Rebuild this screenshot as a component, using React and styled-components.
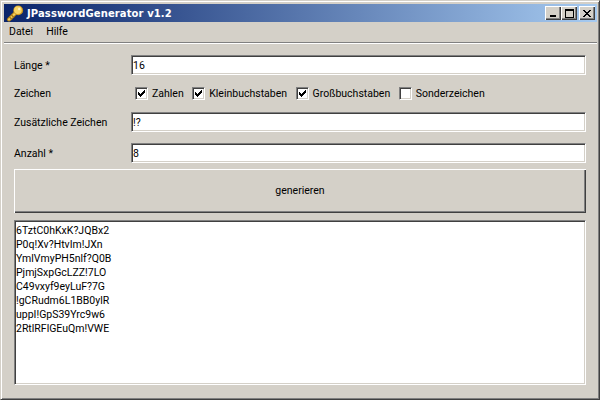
import React from 'react';
import styled, { createGlobalStyle } from 'styled-components';

const GlobalStyle = createGlobalStyle`
  html, body {
    margin: 0;
    padding: 0;
    background: #d4d0c8;
  }
  * {
    box-sizing: border-box;
  }
`;

const Window = styled.div`
  display: flex;
  flex-direction: column;
  width: 600px;
  height: 400px;
  padding: 2px;
  background: #d4d0c8;
  border: 1px solid;
  border-color: #d4d0c8 #404040 #404040 #d4d0c8;
  box-shadow: inset 1px 1px 0 #fff, inset -1px -1px 0 #808080;
  font-family: Roboto, "Noto Sans", sans-serif;
  font-size: 10.5px;
  color: #000;
`;

const TitleBar = styled.div`
  display: flex;
  align-items: center;
  flex: none;
  height: 18px;
  margin: 1px 0 0 1px;
  padding: 0 2px;
  background: linear-gradient(90deg, #0a246a, #a6caf0);
`;

const AppTitle = styled.span`
  margin-left: 3px;
  flex: 1;
  font-family: "DejaVu Sans", sans-serif;
  font-size: 10px;
  font-weight: bold;
  letter-spacing: 0.1px;
  color: #fff;
`;

const CaptionButton = styled.div`
  display: flex;
  align-items: center;
  justify-content: center;
  width: 16px;
  height: 14px;
  margin-left: ${(p) => (p.$gap ? '2px' : '0')};
  background: #d4d0c8;
  box-shadow: inset 1px 1px 0 #fff, inset -1px -1px 0 #404040, inset -2px -2px 0 #808080;
`;

const MenuBar = styled.div`
  display: flex;
  flex: none;
  gap: 13px;
  height: 19px;
  align-items: center;
  padding: 0 6px;
`;

const MenuItem = styled.span`
  line-height: 15px;
`;

const Separator = styled.div`
  flex: none;
  height: 2px;
  margin: 1px 0 0 1px;
  background: #808080;
  border-bottom: 1px solid #fff;
`;

const Content = styled.div`
  display: flex;
  flex: 1;
  flex-direction: column;
  padding: 11px 11px 12px 11px;
`;

const Row = styled.div`
  display: flex;
  align-items: center;
  height: 20px;
  margin-bottom: ${(p) => p.$mb}px;
`;

const Label = styled.label`
  flex: none;
  width: 117px;
`;

const Field = styled.div`
  flex: 1;
  height: 20px;
  padding: 2px 1px;
  background: #fff;
  line-height: 16px;
  border: 1px solid;
  border-color: #808080 #fff #fff #808080;
  box-shadow: inset 1px 1px 0 #404040, inset -1px -1px 0 #d4d0c8;
`;

const Checks = styled.div`
  display: flex;
  align-items: center;
  padding-left: 4px;
`;

const Check = styled.div`
  display: flex;
  align-items: center;
  margin-right: 8.5px;
`;

const Box = styled.span`
  display: flex;
  align-items: center;
  justify-content: center;
  width: 13px;
  height: 13px;
  margin-right: 4px;
  background: #fff;
  border: 1px solid;
  border-color: #808080 #fff #fff #808080;
  box-shadow: inset 1px 1px 0 #404040, inset -1px -1px 0 #d4d0c8;
`;

const GenerateButton = styled.div`
  display: flex;
  flex: none;
  align-items: center;
  justify-content: center;
  height: 44px;
  margin-top: -4px;
  margin-bottom: 7px;
  padding-bottom: 2px;
  background: #d4d0c8;
  box-shadow: inset 1px 1px 0 #fff, inset -1px -1px 0 #404040, inset -2px -2px 0 #808080;
`;

const Output = styled.div`
  height: 165px;
  padding: 3px 1px;
  background: #fff;
  border: 1px solid;
  border-color: #808080 #fff #fff #808080;
  box-shadow: inset 1px 1px 0 #404040, inset -1px -1px 0 #d4d0c8;
`;

const OutputLine = styled.div`
  height: 14px;
  line-height: 14px;
`;

const KeyIcon = () => (
  <svg width="18" height="17" viewBox="0 0 18 17">
    <path d="M3 14.5 L9.5 8" stroke="#a87a18" strokeWidth="4" strokeLinecap="round" fill="none" />
    <path d="M3 14.5 L9.5 8" stroke="#f6cf5a" strokeWidth="2.2" strokeLinecap="round" fill="none" />
    <path d="M3.5 12 L6 14.5 M5.5 10 L8 12.5" stroke="#a87a18" strokeWidth="1.6" fill="none" />
    <circle cx="12.2" cy="5.4" r="4.9" fill="#c9951f" />
    <circle cx="11.9" cy="5.1" r="3.9" fill="#f8d565" />
    <circle cx="13.2" cy="4" r="1.2" fill="#fff3c0" />
  </svg>
);

const CheckMark = () => (
  <svg width="7" height="7" viewBox="0 0 7 7" shapeRendering="crispEdges">
    <path d="M6 0h1v3H6v1H5v1H4v1H3v1H2V6H1V5H0V2h1v1h1v1h1V3h1V2h1V1h1z" fill="#000" />
  </svg>
);

const passwords = [
  '6TztC0hKxK?JQBx2',
  'P0q!Xv?HtvIm!JXn',
  'YmlVmyPH5nlf?Q0B',
  'PjmjSxpGcLZZ!7LO',
  'C49vxyf9eyLuF?7G',
  '!gCRudm6L1BB0ylR',
  'uppI!GpS39Yrc9w6',
  '2RtlRFlGEuQm!VWE',
];

const options = [
  { label: 'Zahlen', checked: true },
  { label: 'Kleinbuchstaben', checked: true },
  { label: 'Großbuchstaben', checked: true },
  { label: 'Sonderzeichen', checked: false },
];

const App = () => (
  <>
    <GlobalStyle />
    <Window>
      <TitleBar>
        <KeyIcon />
        <AppTitle>JPasswordGenerator v1.2</AppTitle>
        <CaptionButton>
          <svg width="8" height="8" viewBox="0 0 8 8" shapeRendering="crispEdges"><rect x="1" y="6" width="6" height="2" /></svg>
        </CaptionButton>
        <CaptionButton>
          <svg width="9" height="9" viewBox="0 0 9 9" shapeRendering="crispEdges"><path d="M0 0h9v9H0zM1 2v6h7V2z" fillRule="evenodd" /></svg>
        </CaptionButton>
        <CaptionButton $gap>
          <svg width="8" height="7" viewBox="0 0 8 7" shapeRendering="crispEdges"><path d="M0 0h2v1h1v1h2V1h1V0h2v1H7v1H6v1H5v1h1v1h1v1h1v1H6V6H5V5H3v1H2v1H0V6h1V5h1V4h1V3H2V2H1V1H0z" /></svg>
        </CaptionButton>
      </TitleBar>
      <MenuBar>
        <MenuItem>Datei</MenuItem>
        <MenuItem>Hilfe</MenuItem>
      </MenuBar>
      <Separator />
      <Content>
        <Row $mb={8}>
          <Label>Länge *</Label>
          <Field>16</Field>
        </Row>
        <Row $mb={9}>
          <Label>Zeichen</Label>
          <Checks>
            {options.map((o) => (
              <Check key={o.label}>
                <Box>{o.checked && <CheckMark />}</Box>
                {o.label}
              </Check>
            ))}
          </Checks>
        </Row>
        <Row $mb={11}>
          <Label>Zusätzliche Zeichen</Label>
          <Field>!?</Field>
        </Row>
        <Row $mb={10}>
          <Label>Anzahl *</Label>
          <Field>8</Field>
        </Row>
        <GenerateButton>generieren</GenerateButton>
        <Output>
          {passwords.map((p) => (
            <OutputLine key={p}>{p}</OutputLine>
          ))}
        </Output>
      </Content>
    </Window>
  </>
);

export default App;
